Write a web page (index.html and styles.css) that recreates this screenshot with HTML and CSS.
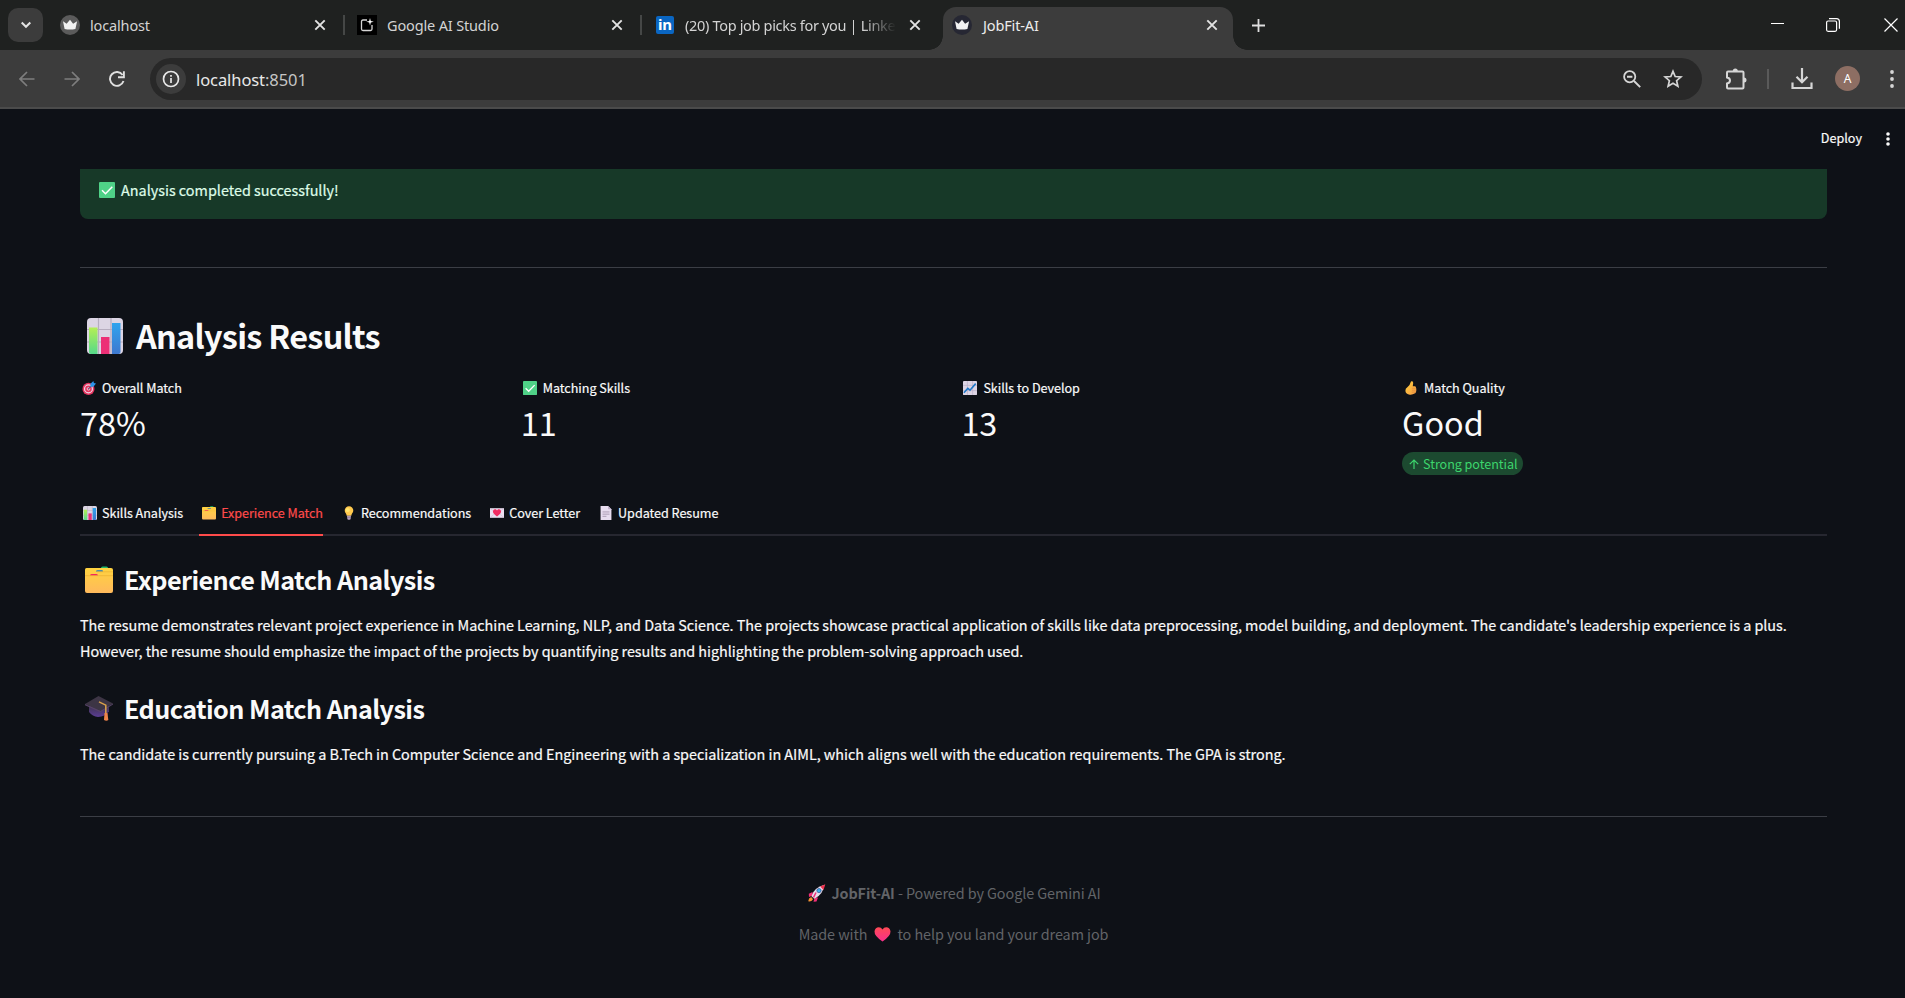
FILE: index.html
```
<!DOCTYPE html>
<html lang="en">
<head>
<meta charset="utf-8">
<title>JobFit-AI</title>
<link rel="stylesheet" href="styles.css">
</head>
<body>
<svg class="defs" aria-hidden="true">
  <defs>
    <linearGradient id="g-lime" x1="0" y1="0" x2="0" y2="1"><stop offset="0" stop-color="#b4ef55"/><stop offset="1" stop-color="#55d98a"/></linearGradient>
    <linearGradient id="g-blue" x1="0" y1="0" x2="0" y2="1"><stop offset="0" stop-color="#2fa4ee"/><stop offset="1" stop-color="#3d78cf"/></linearGradient>
    <linearGradient id="g-folder" x1="0" y1="0" x2="0" y2="1"><stop offset="0" stop-color="#ffd33f"/><stop offset="1" stop-color="#ffb95c"/></linearGradient>
    <linearGradient id="g-cap" x1="0" y1="0" x2="0" y2="1"><stop offset="0" stop-color="#3a3145"/><stop offset="1" stop-color="#5b3d94"/></linearGradient>
    <linearGradient id="g-heart" x1="0" y1="0" x2="0" y2="1"><stop offset="0" stop-color="#ff4a55"/><stop offset="1" stop-color="#f92f8c"/></linearGradient>
    <linearGradient id="g-thumb" x1="0" y1="0" x2="1" y2="1"><stop offset="0" stop-color="#ffd03a"/><stop offset="1" stop-color="#f59a48"/></linearGradient>
  </defs>
  <symbol id="crown" viewBox="0 0 20 20"><path d="M3 6.300 6.600 8.800 10 4.800l3.100 4 4-2.500-1.700 7.600Q10 15.200 4.600 13.900z" fill="#f2f2f2"/></symbol>
  <symbol id="x" viewBox="0 0 12 12"><path d="M1.300 1.300 10.700 10.700M10.700 1.300 1.300 10.700" fill="none" stroke="#e3e3e3" stroke-width="1.900"/></symbol>
  <symbol id="bars" viewBox="0 0 36 36"><rect width="36" height="36" rx="4" fill="#dcd5e4"/><path d="M11.500 0V36M24 0V36M0 11.500H36M0 24H36" stroke="#b6adbf" stroke-width="1.200"/><path d="M2 9.500h8.500V36H4q-2 0-2-2z" fill="url(#g-lime)"/><path d="M14 19h8.500v17H14z" fill="#ec2f76"/><path d="M25 5h8.500v29q0 2-2 2H25z" fill="url(#g-blue)"/></symbol>
  <symbol id="check" viewBox="0 0 16 16"><rect width="16" height="16" rx="1" fill="#4fd187"/><path d="m3 8.300 3.500 3.400L13.300 4.700" fill="none" stroke="#fff" stroke-width="1.500"/></symbol>
  <symbol id="target" viewBox="0 0 16 16"><circle cx="7.400" cy="9" r="6.900" fill="#e5345f"/><circle cx="7.400" cy="9" r="4.500" fill="none" stroke="#ecd7e5" stroke-width="1.400"/><circle cx="7.400" cy="9" r="1.500" fill="none" stroke="#ecd7e5"/><path d="m7.400 9 5-5" stroke="#5a547d" stroke-width="1.200"/><path d="m9.500 6.500.2-3.500L13 0l.6 2.200 2.400.6-3 3.700z" fill="#2b93e8"/></symbol>
  <symbol id="trend" viewBox="0 0 16 16"><rect width="16" height="16" rx="1" fill="#ddd5e5"/><path d="M5 0v16M11 0v16M0 5h16M0 11h16" stroke="#b7abc3" stroke-width=".7"/><path d="m1 13.500 4.500-5 2.500 2L14.500 3" fill="none" stroke="#1f78c8" stroke-width="1.800"/></symbol>
  <symbol id="thumb" viewBox="0 0 16 16"><path d="M8.800.3q2-.2 1.700 2.200L10 6l2.300.1q1.800.3 1.400 1.900 1 1 .2 2.200.7 1.200-.3 2.100.1 1.600-1.500 2.100-2.200 1.500-5.500 1.200-4.500-.5-5-4.300-.2-2.800 2.200-4.200Q7 4.800 7.600 1.500 7.800.4 8.800.3" fill="url(#g-thumb)"/><path d="M9 8.300h4.500M9 10.500h4.500M8.800 12.700h4" stroke="#d9823a" stroke-width=".7"/></symbol>
  <symbol id="folder" viewBox="0 0 28 28"><path d="M16 2q0-1.500 1.500-1.500h4Q23 .5 23 2v1h-7z" fill="#21b66b"/><path d="M1.500 2H26q2 0 2 2v21q0 2-2 2H2q-2 0-2-2V3.500Q0 2 1.500 2" fill="url(#g-folder)"/><path d="M11 5.500q0-1.300 1.500-1.300h4.500q1 0 1 1.300z" fill="#1677c9"/><path d="M5 9.500Q5 8 6.500 8h5q1.500 0 1.500 1.500z" fill="#f2265e"/><path d="M0 9.700h28M12 5.800h16" stroke="#e9a92d" stroke-width=".6"/></symbol>
  <symbol id="bulb" viewBox="0 0 16 16"><path d="M8 .3a4.900 4.900 0 0 1 4.900 4.900c0 2.400-2 3.400-2.300 5.800H5.400C5.100 8.600 3.100 7.600 3.100 5.200A4.900 4.900 0 0 1 8 .3" fill="#ffc94e"/><circle cx="6.600" cy="4.600" r="2.300" fill="#ffe46e"/><path d="M5.700 11h4.600l-.5 4q-1.800 1.300-3.600 0z" fill="#b9a1bd"/><path d="M5.900 12.800h4.300" stroke="#786783" stroke-width=".7"/></symbol>
  <symbol id="letter" viewBox="0 0 16 16"><path d="M0 2.500h16v11H0z" fill="#eadff0"/><path d="m0 2.700 8 6 8-6M0 13.500 6 8M16 13.500 10 8" stroke="#c9b6d0" stroke-width=".6" fill="none"/><path d="M8 12Q3.200 8.800 3.300 6 4 3.100 6.500 3.800q1 .4 1.500 1.300.5-.9 1.500-1.300 2.500-.7 3.200 2.200.1 2.800-4.700 6" fill="#f12c62"/></symbol>
  <symbol id="doc" viewBox="0 0 16 16"><path d="M1.800 0h8.700l3.700 3.700V16H1.800z" fill="#e7dcef"/><path d="M10.500 0v3.700h3.700z" fill="#b9a9c4"/><path d="M4 6.800h8M4 9.300h8M4 11.800h4.500" stroke="#a393ad" stroke-width="1"/></symbol>
  <symbol id="cap" viewBox="0 0 28 26"><path d="M4 10v6q3.500 4.500 9 5 7-.5 11-5.500V8z" fill="url(#g-cap)"/><path d="M0 8 13.500 0 28 7.500 15.500 15z" fill="#3d3545"/><path d="M0 8l15.500 7L28 7.500v1L15.500 16.300 0 9.200z" fill="#574468"/><path d="M14 5.800l6.800 3.400v8" fill="none" stroke="#dba24b" stroke-width="1.500"/><path d="M19.500 17h3l.8 7q-1.800 1.600-4.300 0z" fill="#f0834a"/></symbol>
  <symbol id="rocket" viewBox="0 0 18 18"><path d="M4.500 8 .8 9.800 1 13l4-1.500zM10 13.500l-1.500 4-3 .2 1.300-4.500z" fill="#f02e79"/><path d="M3.500 12.200Q6 3.500 16.500.8 15 11 6.300 14.800z" fill="#e6dcea"/><path d="M12.200 2.500 17.300.3 15.500 6z" fill="#ef3450"/><circle cx="11" cy="6.600" r="2.100" fill="#3db0ea" stroke="#455c9a" stroke-width=".8"/><path d="m8 8.500-2.500 5" stroke="#f02e79" stroke-width="1.500"/><path d="M3.200 13q-2.700 1-3 4.300Q4 18 5 15.300z" fill="#f79332"/></symbol>
  <symbol id="heart" viewBox="0 0 16 15"><path d="M8 14.500Q-.3 9 0 4.300.8.300 4.300.3 6.700.3 8 2.500 9.300.3 11.700.3q3.500 0 4.300 4Q16.300 9 8 14.500" fill="url(#g-heart)"/></symbol>
</svg>

<header class="browser">
  <div class="tabstrip">
    <button class="tab-search" aria-label="Search tabs"><svg width="12" height="8" viewBox="0 0 12 8"><path d="m1.700 1.500 4.300 4.300 4.300-4.300" fill="none" stroke="#e3e3e3" stroke-width="2"/></svg></button>
    <div class="tab tab-one"><span class="fav fav-grey"><svg><use href="#crown"/></svg></span><span class="tab-title t-local">localhost</span><svg class="x"><use href="#x"/></svg></div>
    <i class="tab-sep"></i>
    <div class="tab tab-two"><span class="fav fav-studio"><svg viewBox="0 0 20 20"><path d="M10 5H6q-1.500 0-1.500 1.500v7.500q0 1.500 1.500 1.500h7.500q1.500 0 1.500-1.500v-4" fill="none" stroke="#d5d5d5" stroke-width="1.300"/><path d="m13 3 .8 3 3 .8-3 .8-.8 3-.8-3-3-.8 3-.8z" fill="#fff"/></svg></span><span class="tab-title t-studio">Google AI Studio</span><svg class="x"><use href="#x"/></svg></div>
    <i class="tab-sep"></i>
    <div class="tab tab-three"><span class="fav fav-in">in</span><span class="tab-title t-linked">(20) Top job picks for you | Linke</span><svg class="x"><use href="#x"/></svg></div>
    <div class="tab tab-active"><span class="fav fav-dark"><svg><use href="#crown"/></svg></span><span class="tab-title t-job">JobFit-AI</span><svg class="x"><use href="#x"/></svg></div>
    <svg class="plus" viewBox="0 0 13 13"><path d="M6.500 0v13M0 6.500h13" stroke="#dedede" stroke-width="1.800"/></svg>
    <div class="win">
      <svg class="min" width="13" height="13" viewBox="0 0 13 13"><path d="M0 5.500h13" stroke="#fff"/></svg>
      <svg width="14" height="14" viewBox="0 0 14 14"><rect x=".6" y="3" width="10" height="10.300" rx="1.500" fill="none" stroke="#fff" stroke-width="1.200"/><path d="M3 .6h7.500q2.900 0 2.900 2.900v7.300" fill="none" stroke="#fff" stroke-width="1.200"/></svg>
      <svg width="14" height="14" viewBox="0 0 14 14"><path d="m.5.5 13 13M13.500.5l-13 13" stroke="#fff" stroke-width="1.200"/></svg>
    </div>
  </div>
  <div class="toolbar">
    <div class="nav">
      <svg width="16" height="16" viewBox="0 0 16 16"><path d="M15.500 8H1.500M8 1 1 8l7 7" fill="none" stroke="#7e7e7e" stroke-width="1.700"/></svg>
      <svg width="16" height="16" viewBox="0 0 16 16"><path d="M.5 8h14M8 1l7 7-7 7" fill="none" stroke="#7e7e7e" stroke-width="1.700"/></svg>
      <svg width="16" height="16" viewBox="0 0 16 16"><path d="M14.500 10A6.900 6.900 0 1 1 13.600 4" fill="none" stroke="#e0e0e0" stroke-width="1.900"/><path d="M14.900.3v6H9" fill="none" stroke="#e0e0e0" stroke-width="1.900"/></svg>
    </div>
    <div class="omnibox">
      <span class="info"><svg width="18" height="18" viewBox="0 0 18 18"><circle cx="9" cy="9" r="7.500" fill="none" stroke="#e8e8e8" stroke-width="1.700"/><path d="M9 8v5M9 5v1.800" stroke="#e8e8e8" stroke-width="1.700"/></svg></span>
      <span class="url">localhost<span>:8501</span></span>
      <svg class="lens" width="18" height="18" viewBox="0 0 18 18"><circle cx="6.700" cy="6.700" r="5.600" fill="none" stroke="#d6d6d6" stroke-width="1.800"/><path d="m11 11 6.200 6.200M4 6.700h5.400" stroke="#d6d6d6" stroke-width="1.900"/></svg>
      <svg width="20" height="20" viewBox="0 0 20 20"><path d="m10 2.300 2.200 5.200 5.700.5-4.300 3.700 1.300 5.600-4.900-3-4.900 3 1.300-5.600L2.100 8l5.700-.5z" fill="none" stroke="#d6d6d6" stroke-width="1.700"/></svg>
    </div>
    <svg class="puzzle" width="22" height="22" viewBox="0 0 22 22"><path d="M3 3.500h14.500q1 0 1 1v15q0 1-1 1H3q-1 0-1-1v-4q3-.5 3-3t-3-3v-5q0-1 1-1z" fill="none" stroke="#d6d6d6" stroke-width="2"/><path d="M7.800 3a2.500 2.500 0 0 1 5 0zM19 9.500a2.500 2.500 0 0 1 0 5z" fill="#d6d6d6"/></svg>
    <i class="tool-sep"></i>
    <svg class="download" width="22" height="22" viewBox="0 0 22 22"><path d="M11 0v13.500M5.500 8.800l5.500 5.500 5.500-5.500M1.500 14.500v5.500h19v-5.500" fill="none" stroke="#d6d6d6" stroke-width="2.200"/></svg>
    <span class="avatar">A</span>
    <svg class="dots" width="4" height="18" viewBox="0 0 4 18"><g fill="#d6d6d6"><circle cx="2" cy="2" r="1.900"/><circle cx="2" cy="9" r="1.900"/><circle cx="2" cy="16" r="1.900"/></g></svg>
  </div>
</header>

<main class="app">
  <div class="app-bar"><span class="deploy">Deploy</span><svg width="4" height="14" viewBox="0 0 4 14"><g fill="#fafafa"><circle cx="2" cy="2" r="1.800"/><circle cx="2" cy="7" r="1.800"/><circle cx="2" cy="12" r="1.800"/></g></svg></div>
  <div class="content">
    <div class="alert"><svg><use href="#check"/></svg><span>Analysis completed successfully!</span></div>
    <hr class="rule rule-top">
    <h1 class="title"><svg><use href="#bars"/></svg><span>Analysis Results</span></h1>
    <section class="metrics">
      <div class="metric"><div class="label"><svg><use href="#target"/></svg><span>Overall Match</span></div><div class="value">78%</div></div>
      <div class="metric"><div class="label"><svg><use href="#check"/></svg><span>Matching Skills</span></div><div class="value">11</div></div>
      <div class="metric"><div class="label"><svg><use href="#trend"/></svg><span>Skills to Develop</span></div><div class="value">13</div></div>
      <div class="metric"><div class="label"><svg><use href="#thumb"/></svg><span>Match Quality</span></div><div class="value">Good</div>
        <div class="pill"><svg width="10" height="10" viewBox="0 0 10 10"><path d="M5 10V1M.8 5.200 5 1l4.200 4.200" fill="none" stroke="#3dd56d" stroke-width="1.200"/></svg><span>Strong potential</span></div></div>
    </section>
    <nav class="tabs">
      <a class="tb tb1"><svg><use href="#bars"/></svg><span>Skills Analysis</span></a>
      <a class="tb tb2"><svg><use href="#folder"/></svg><span>Experience Match</span></a>
      <a class="tb tb3"><svg><use href="#bulb"/></svg><span>Recommendations</span></a>
      <a class="tb tb4"><svg><use href="#letter"/></svg><span>Cover Letter</span></a>
      <a class="tb tb5"><svg><use href="#doc"/></svg><span>Updated Resume</span></a>
    </nav>
    <h3 class="sub"><svg><use href="#folder"/></svg><span>Experience Match Analysis</span></h3>
    <p class="para"><span>The resume demonstrates relevant project experience in Machine Learning, NLP, and Data Science. The projects showcase practical application of skills like data preprocessing, model building, and deployment. The candidate's leadership experience is a plus.</span><br><span>However, the resume should emphasize the impact of the projects by quantifying results and highlighting the problem-solving approach used.</span></p>
    <h3 class="sub sub-edu"><svg><use href="#cap"/></svg><span>Education Match Analysis</span></h3>
    <p class="para"><span>The candidate is currently pursuing a B.Tech in Computer Science and Engineering with a specialization in AIML, which aligns well with the education requirements. The GPA is strong.</span></p>
    <hr class="rule rule-bottom">
    <footer class="foot">
      <p class="powered"><svg class="rocket"><use href="#rocket"/></svg><span><b>JobFit-AI</b> - Powered by Google Gemini AI</span></p>
      <p><span>Made with</span><svg class="heart"><use href="#heart"/></svg><span>to help you land your dream job</span></p>
    </footer>
  </div>
</main>
</body>
</html>
```
FILE: styles.css
```
* { box-sizing: border-box; }
body { margin: 0; width: 1905px; height: 998px; overflow: hidden; background: #0e1117; color: #fafafa; font-family: "Noto Sans CJK SC", "Noto Sans", sans-serif; font-size: 14.4px; }
.defs { position: absolute; width: 0; height: 0; }
svg { display: block; flex: none; }
h1, h3, p, hr { margin: 0; }
span { white-space: nowrap; }

/* browser frame */
.browser { height: 109px; background: #3c3c3c; font-family: "Noto Sans", "Open Sans", sans-serif; border-bottom: 2px solid #4b4b4b; }
.tabstrip { height: 50px; background: #1f2120; display: flex; align-items: center; padding-left: 8px; }
.tab-search { width: 35px; height: 34px; padding: 0; border: 0; border-radius: 10px; background: #3c3c3c; display: flex; align-items: center; justify-content: center; }
.tab { height: 50px; display: flex; align-items: center; color: #d3d3d3; font-size: 14.500px; letter-spacing: -.15px; }
.tab-one { width: 300px; padding: 0 17px 0 17px; }
.tab-two { width: 295px; padding: 0 17px 0 12px; }
.tab-three { width: 301px; padding: 0 22px 0 14px; }
.tab-active { width: 290px; height: 43px; align-self: flex-end; padding: 0 15px 7px 9px; background: #3c3c3c; border-radius: 13px 13px 0 0; color: #ececec; position: relative; }
.tab-active::before, .tab-active::after { content: ""; position: absolute; bottom: 0; width: 14px; height: 14px; }
.tab-active::before { left: -14px; background: radial-gradient(circle at 0 0, transparent 13.500px, #3c3c3c 14px); }
.tab-active::after { right: -14px; background: radial-gradient(circle at 100% 0, transparent 13.500px, #3c3c3c 14px); }
.tab-sep { width: 2px; height: 20px; background: #454746; }
.fav { width: 20px; height: 20px; flex: none; margin-right: 10px; }
.fav svg { width: 20px; height: 20px; }
.fav-grey { background: #5b5b5b; border-radius: 50%; }
.fav-dark { background: #262733; border-radius: 50%; }
.fav-studio { background: #000; }
.fav-in { width: 18px; height: 18px; margin-right: 11px; background: #0a66c2; border-radius: 2px; color: #fff; font: bold 15px/17px "Noto Sans", sans-serif; text-align: center; }
.tab-title { flex: 1; line-height: 24px; }
.t-linked { flex: none; width: 211px; margin-right: 13px; letter-spacing: -.32px; -webkit-mask-image: linear-gradient(90deg, #000 178px, transparent 211px); mask-image: linear-gradient(90deg, #000 178px, transparent 211px); }
.t-job { padding-left: 1px; }
.x { width: 12px; height: 12px; }
.plus { width: 13px; height: 13px; margin-left: 19px; }
.win { margin-left: auto; padding-right: 7px; display: flex; gap: 44px; }
.min { margin-right: -2px; }
.toolbar { height: 57px; display: flex; align-items: center; padding-left: 19px; }
.nav { display: flex; gap: 29px; margin-right: 25px; }
.omnibox { width: 1552px; height: 42px; border-radius: 21px; background: #282828; display: flex; align-items: center; padding: 0 19px 0 6px; }
.info { width: 30px; height: 30px; border-radius: 50%; background: #3c3c3c; display: flex; align-items: center; justify-content: center; }
.url { margin-left: 10px; margin-right: auto; padding-top: 1px; font-size: 16.500px; letter-spacing: -.08px; color: #e8e8e8; }
.url span { color: #c5c5c5; }
.lens { margin-right: 22px; }
.puzzle { margin-left: 23px; }
.tool-sep { width: 2px; height: 20px; margin: 0 22px 0 20px; background: #5a5a5a; }
.avatar { width: 25px; height: 25px; margin: 0 30px 0 22px; border-radius: 50%; background: #8d6e63; color: #fff; font-size: 12px; line-height: 25px; text-align: center; }

/* app */
.app { padding-right: 78px; padding-left: 80px; }
.app-bar { height: 60px; margin-right: -63px; display: flex; align-items: center; justify-content: flex-end; gap: 24px; }
.deploy { font-size: 12.600px; line-height: 20px; padding-bottom: 2px; }
.deploy, .alert, .label, .tb, .para { -webkit-text-stroke: .2px currentColor; }
.alert { height: 50px; padding: 0 19px 8px; display: flex; align-items: center; gap: 6px; background: #173928; border-radius: 0 0 8px 8px; color: #dffde9; line-height: 24px; }
.alert svg { width: 16px; height: 16px; }
.alert span { padding-bottom: 1px; }
.rule { border: 0; height: 1px; background: #3b3e45; }
.rule-top { margin-top: 48px; }
.title { margin-top: 46px; height: 43px; padding: 0 7px; display: flex; align-items: center; gap: 13px; font-size: 32.400px; font-weight: 600; line-height: 43px; letter-spacing: -.72px; }
.title span { padding-bottom: 3px; }
.title svg { width: 36px; height: 36px; }
.metrics { margin-top: 19px; height: 116px; display: grid; grid-template-columns: repeat(4, 440.700px); }
.label { height: 24px; padding-left: 2px; display: flex; align-items: center; gap: 6px; font-size: 12.600px; line-height: 24px; letter-spacing: -.03px; }
.label svg { width: 14px; height: 14px; }
.value { height: 46px; margin-top: -1px; font-size: 32.400px; line-height: 46px; }
.pill { width: 121px; height: 23px; margin-top: 7px; padding-left: 7px; display: flex; align-items: center; gap: 4px; border-radius: 12px; background: #1c4a30; color: #3dd56d; font-size: 12.600px; line-height: 23px; letter-spacing: -.05px; }
.pill span { padding-bottom: 1px; }
.tabs { height: 44px; display: flex; border-bottom: 2px solid #262730; margin-bottom: 21px; }
.tb { height: 44px; display: flex; align-items: center; gap: 5px; padding: 0 0 3px 3px; margin-right: 16px; font-size: 12.600px; line-height: 24px; letter-spacing: -.03px; }
.tb svg { width: 14px; height: 14px; }
.tb2 { color: #ff4b4b; border-bottom: 2px solid #ff4b4b; padding-bottom: 1px; letter-spacing: -.06px; }
.sub { height: 45px; padding-left: 5px; display: flex; align-items: center; gap: 11px; font-size: 25.200px; font-weight: 600; line-height: 45px; letter-spacing: -.57px; }
.sub svg { width: 28px; height: 28px; }
.para { line-height: 26px; margin-top: 10px; letter-spacing: -.03px; }
.sub-edu { margin-top: 22px; }
.rule-bottom { margin-top: 49px; }
.foot { margin-top: 64px; color: #626468; letter-spacing: -.08px; }
.foot p { height: 24px; margin-bottom: 17px; display: flex; align-items: center; justify-content: center; line-height: 24px; }
.powered { padding-left: 2px; }
.rocket { width: 18px; height: 18px; margin-right: 5px; }
.heart { width: 17px; height: 15px; margin: 0 6px 0 7px; }
```
